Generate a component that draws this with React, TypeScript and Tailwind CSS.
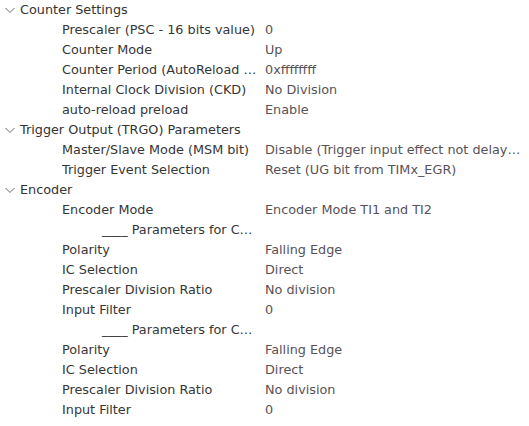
import React from "react";

type Row =
  | { kind: "section"; title: string }
  | { kind: "item"; label: string; value: string; indent?: boolean };

const rows: Row[] = [
  { kind: "section", title: "Counter Settings" },
  { kind: "item", label: "Prescaler (PSC - 16 bits value)", value: "0" },
  { kind: "item", label: "Counter Mode", value: "Up" },
  { kind: "item", label: "Counter Period (AutoReload Register - 32 bits value )", value: "0xffffffff" },
  { kind: "item", label: "Internal Clock Division (CKD)", value: "No Division" },
  { kind: "item", label: "auto-reload preload", value: "Enable" },
  { kind: "section", title: "Trigger Output (TRGO) Parameters" },
  { kind: "item", label: "Master/Slave Mode (MSM bit)", value: "Disable (Trigger input effect not delayed)" },
  { kind: "item", label: "Trigger Event Selection", value: "Reset (UG bit from TIMx_EGR)" },
  { kind: "section", title: "Encoder" },
  { kind: "item", label: "Encoder Mode", value: "Encoder Mode TI1 and TI2" },
  { kind: "item", label: "____ Parameters for Channel 1 ____", value: "", indent: true },
  { kind: "item", label: "Polarity", value: "Falling Edge" },
  { kind: "item", label: "IC Selection", value: "Direct" },
  { kind: "item", label: "Prescaler Division Ratio", value: "No division" },
  { kind: "item", label: "Input Filter", value: "0" },
  { kind: "item", label: "____ Parameters for Channel 2 ____", value: "", indent: true },
  { kind: "item", label: "Polarity", value: "Falling Edge" },
  { kind: "item", label: "IC Selection", value: "Direct" },
  { kind: "item", label: "Prescaler Division Ratio", value: "No division" },
  { kind: "item", label: "Input Filter", value: "0" },
];

function Chevron() {
  return (
    <svg width="12" height="12" viewBox="0 0 12 12" className="shrink-0">
      <path d="M1.5 4 L6 8.5 L10.5 4" fill="none" stroke="#6b6b6b" strokeWidth="1" />
    </svg>
  );
}

export default function App() {
  return (
    <div
      className="w-[529px] h-[426px] bg-white overflow-hidden text-[12.8px]"
      style={{ fontFamily: '"DejaVu Sans", sans-serif' }}
    >
      {rows.map((r, i) =>
        r.kind === "section" ? (
          <div key={i} className="flex items-center h-[20px] pl-[4px] gap-[4px] text-[#333333]">
            <Chevron />
            <span className="whitespace-nowrap">{r.title}</span>
          </div>
        ) : (
          <div key={i} className="flex items-center h-[20px]">
            <div
              className={`w-[197px] ml-[62px] shrink-0 whitespace-nowrap overflow-hidden text-ellipsis text-[#363636] ${
                r.indent ? "pl-[40px]" : ""
              }`}
            >
              {r.label}
            </div>
            <div className="ml-[6px] w-[262px] whitespace-nowrap overflow-hidden text-ellipsis text-[#575257]">
              {r.value}
            </div>
          </div>
        )
      )}
    </div>
  );
}
